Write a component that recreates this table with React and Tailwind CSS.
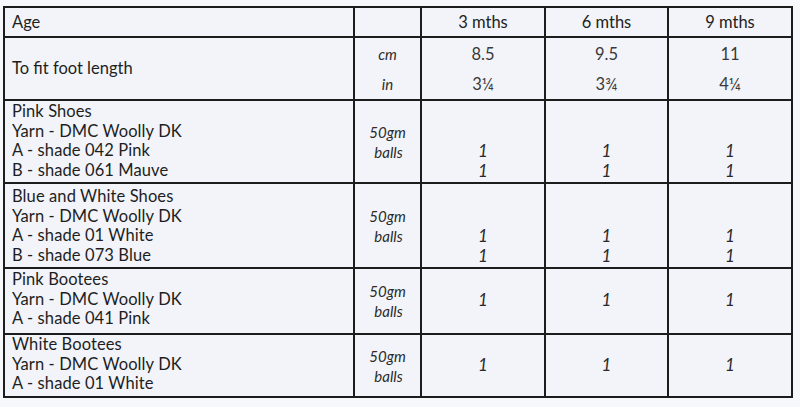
import React from "react";

const font = { fontFamily: 'Lato, "Liberation Sans", Arial, sans-serif' };

function Cell({ className = "", children }) {
  return <div className={"bg-[#f2f4f9] " + className}>{children}</div>;
}

function One() {
  return <span className="italic text-[#2a2a2a] text-[17px]">1</span>;
}

function Balls() {
  return (
    <div className="flex flex-col items-center justify-center h-full italic text-[15px] leading-[20px] text-[#2b2b2b]">
      <span>50gm</span>
      <span className="pl-[2px]">balls</span>
    </div>
  );
}

function Lines({ lines, pt }) {
  return (
    <div className={"flex flex-col pl-[7px] text-[16.5px] leading-[19.5px] tracking-[0.1px] text-[#1e1e1e] " + pt}>
      {lines.map((l, i) => (
        <span key={i}>{l}</span>
      ))}
    </div>
  );
}

function ValLines({ lines, pt }) {
  return (
    <div className={"flex flex-col items-center text-[16.5px] leading-[19.5px] " + pt}>
      {lines.map((l, i) => (
        <span key={i} className="h-[19.5px]">{l ? <One /> : "\u00a0"}</span>
      ))}
    </div>
  );
}

export default function App() {
  const items = [
    {
      lines: ["Pink Shoes", "Yarn - DMC Woolly DK", "A - shade 042 Pink", "B - shade 061 Mauve"],
      vals: ["", "", "1", "1"],
      pt: "pt-[1px]",
    },
    {
      lines: ["Blue and White Shoes", "Yarn - DMC Woolly DK", "A - shade 01 White", "B - shade 073 Blue"],
      vals: ["", "", "1", "1"],
      pt: "pt-[3px]",
    },
    {
      lines: ["Pink Bootees", "Yarn - DMC Woolly DK", "A - shade 041 Pink"],
      vals: ["", "1", ""],
      pt: "pt-[1px]",
    },
    {
      lines: ["White Bootees", "Yarn - DMC Woolly DK", "A - shade 01 White"],
      vals: ["", "1", ""],
      pt: "pt-0",
    },
  ];

  return (
    <div className="w-[800px] h-[407px] bg-[#f7f8fb] pt-[6px] pl-[3px]" style={font}>
      <div className="grid w-[790px] bg-[#1c1c1c] p-[2px] gap-[2px] grid-cols-[348px_65px_122px_121px_122px] grid-rows-[28px_61px_81px_83px_64px_61px]">
        {/* header */}
        <Cell className="flex items-center pl-[7px] text-[16.5px] text-[#1e1e1e]">Age</Cell>
        <Cell />
        <Cell className="flex items-center justify-center text-[16.5px] text-[#222]">3 mths</Cell>
        <Cell className="flex items-center justify-center text-[16.5px] text-[#222]">6 mths</Cell>
        <Cell className="flex items-center justify-center text-[16.5px] text-[#222]">9 mths</Cell>

        {/* foot length */}
        <Cell className="flex items-center pl-[7px] text-[16.5px] text-[#1e1e1e]">To fit foot length</Cell>
        <Cell className="flex flex-col items-center justify-center gap-[10px] italic text-[15px] leading-[20px] text-[#2b2b2b]">
          <span>cm</span>
          <span>in</span>
        </Cell>
        {[
          ["8.5", "3¼"],
          ["9.5", "3¾"],
          ["11", "4¼"],
        ].map(([a, b], i) => (
          <Cell key={i} className="flex flex-col items-center justify-center gap-[10px] text-[16.5px] leading-[20px] text-[#3a3a3a]">
            <span>{a}</span>
            <span>{b}</span>
          </Cell>
        ))}

        {items.map((it, idx) => (
          <React.Fragment key={idx}>
            <Cell>
              <Lines lines={it.lines} pt={it.pt} />
            </Cell>
            <Cell>
              <Balls />
            </Cell>
            {[0, 1, 2].map((c) => (
              <Cell key={c}>
                <ValLines lines={it.vals} pt={it.pt} />
              </Cell>
            ))}
          </React.Fragment>
        ))}
      </div>
    </div>
  );
}
